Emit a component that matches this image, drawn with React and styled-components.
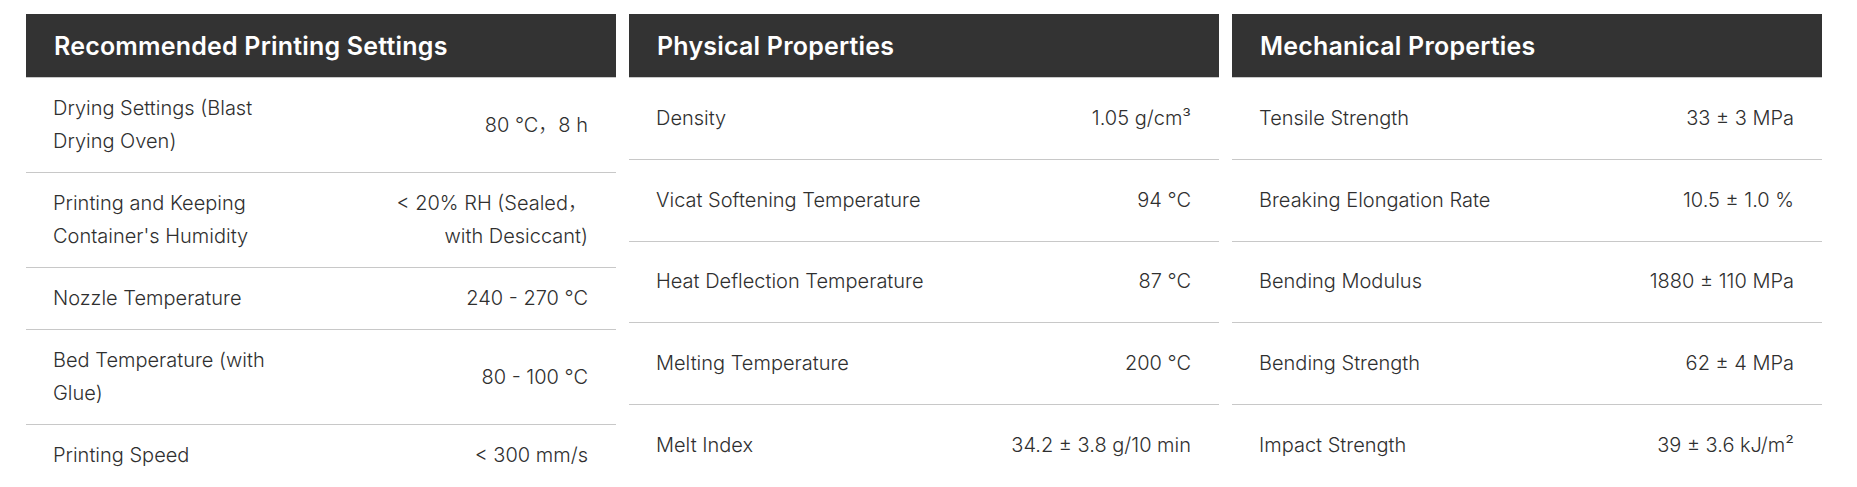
import React from "react";
import styled, { createGlobalStyle } from "styled-components";

const GlobalStyle = createGlobalStyle`
  html, body {
    margin: 0;
    padding: 0;
    background: #ffffff;
  }
  body {
    font-family: Inter, "Noto Sans", "Noto Sans CJK SC", sans-serif;
    color: #333333;
  }
`;

const Grid = styled.div`
  display: grid;
  grid-template-columns: repeat(3, 590px);
  column-gap: 13px;
  padding: 14px 0 0 26px;
  align-items: stretch;
`;

const Card = styled.section`
  display: flex;
  flex-direction: column;
`;

const Header = styled.h2`
  margin: 0;
  height: 63px;
  box-sizing: content-box;
  display: flex;
  align-items: center;
  padding: 0 28px;
  background: #333333;
  color: #ffffff;
  font-size: 25px;
  font-weight: 600;
  letter-spacing: 0.2px;
  border-bottom: 1px solid #c8c8c8;
`;

const Body = styled.div`
  flex: 1;
  display: flex;
  flex-direction: column;
`;

const Row = styled.div`
  flex: ${(p) => (p.$stretch ? "1 1 0" : "0 0 auto")};
  display: flex;
  align-items: center;
  justify-content: space-between;
  gap: 16px;
  padding: 14px 28px 14px 27px;
  border-bottom: 1px solid #c8c8c8;
  font-size: 20px;
  font-weight: 300;
  line-height: 33px;
  letter-spacing: 0;
  color: #2f2f2f;
  &:last-child {
    border-bottom: none;
  }
`;

const Label = styled.span`
  max-width: ${(p) => p.$max || "none"};
`;

const Value = styled.span`
  text-align: right;
  max-width: ${(p) => p.$max || "none"};
  white-space: ${(p) => (p.$max ? "normal" : "nowrap")};
`;

const sections = [
  {
    title: "Recommended Printing Settings",
    stretch: false,
    labelMax: "240px",
    valueMax: "210px",
    rows: [
      ["Drying Settings (Blast Drying Oven)", "80 °C，8 h"],
      ["Printing and Keeping Container's Humidity", "< 20% RH (Sealed，with Desiccant)"],
      ["Nozzle Temperature", "240 - 270 °C"],
      ["Bed Temperature (with Glue)", "80 - 100 °C"],
      ["Printing Speed", "< 300 mm/s"],
    ],
  },
  {
    title: "Physical Properties",
    stretch: true,
    rows: [
      ["Density", "1.05 g/cm³"],
      ["Vicat Softening Temperature", "94 °C"],
      ["Heat Deflection Temperature", "87 °C"],
      ["Melting Temperature", "200 °C"],
      ["Melt Index", "34.2 ± 3.8 g/10 min"],
    ],
  },
  {
    title: "Mechanical Properties",
    stretch: true,
    rows: [
      ["Tensile Strength", "33 ± 3 MPa"],
      ["Breaking Elongation Rate", "10.5 ± 1.0 %"],
      ["Bending Modulus", "1880 ± 110 MPa"],
      ["Bending Strength", "62 ± 4 MPa"],
      ["Impact Strength", "39 ± 3.6 kJ/m²"],
    ],
  },
];

export default function App() {
  return (
    <>
      <GlobalStyle />
      <Grid>
        {sections.map((s) => (
          <Card key={s.title}>
            <Header>{s.title}</Header>
            <Body>
              {s.rows.map(([label, value]) => (
                <Row key={label} $stretch={s.stretch}>
                  <Label $max={s.labelMax}>{label}</Label>
                  <Value $max={s.valueMax}>{value}</Value>
                </Row>
              ))}
            </Body>
          </Card>
        ))}
      </Grid>
    </>
  );
}
